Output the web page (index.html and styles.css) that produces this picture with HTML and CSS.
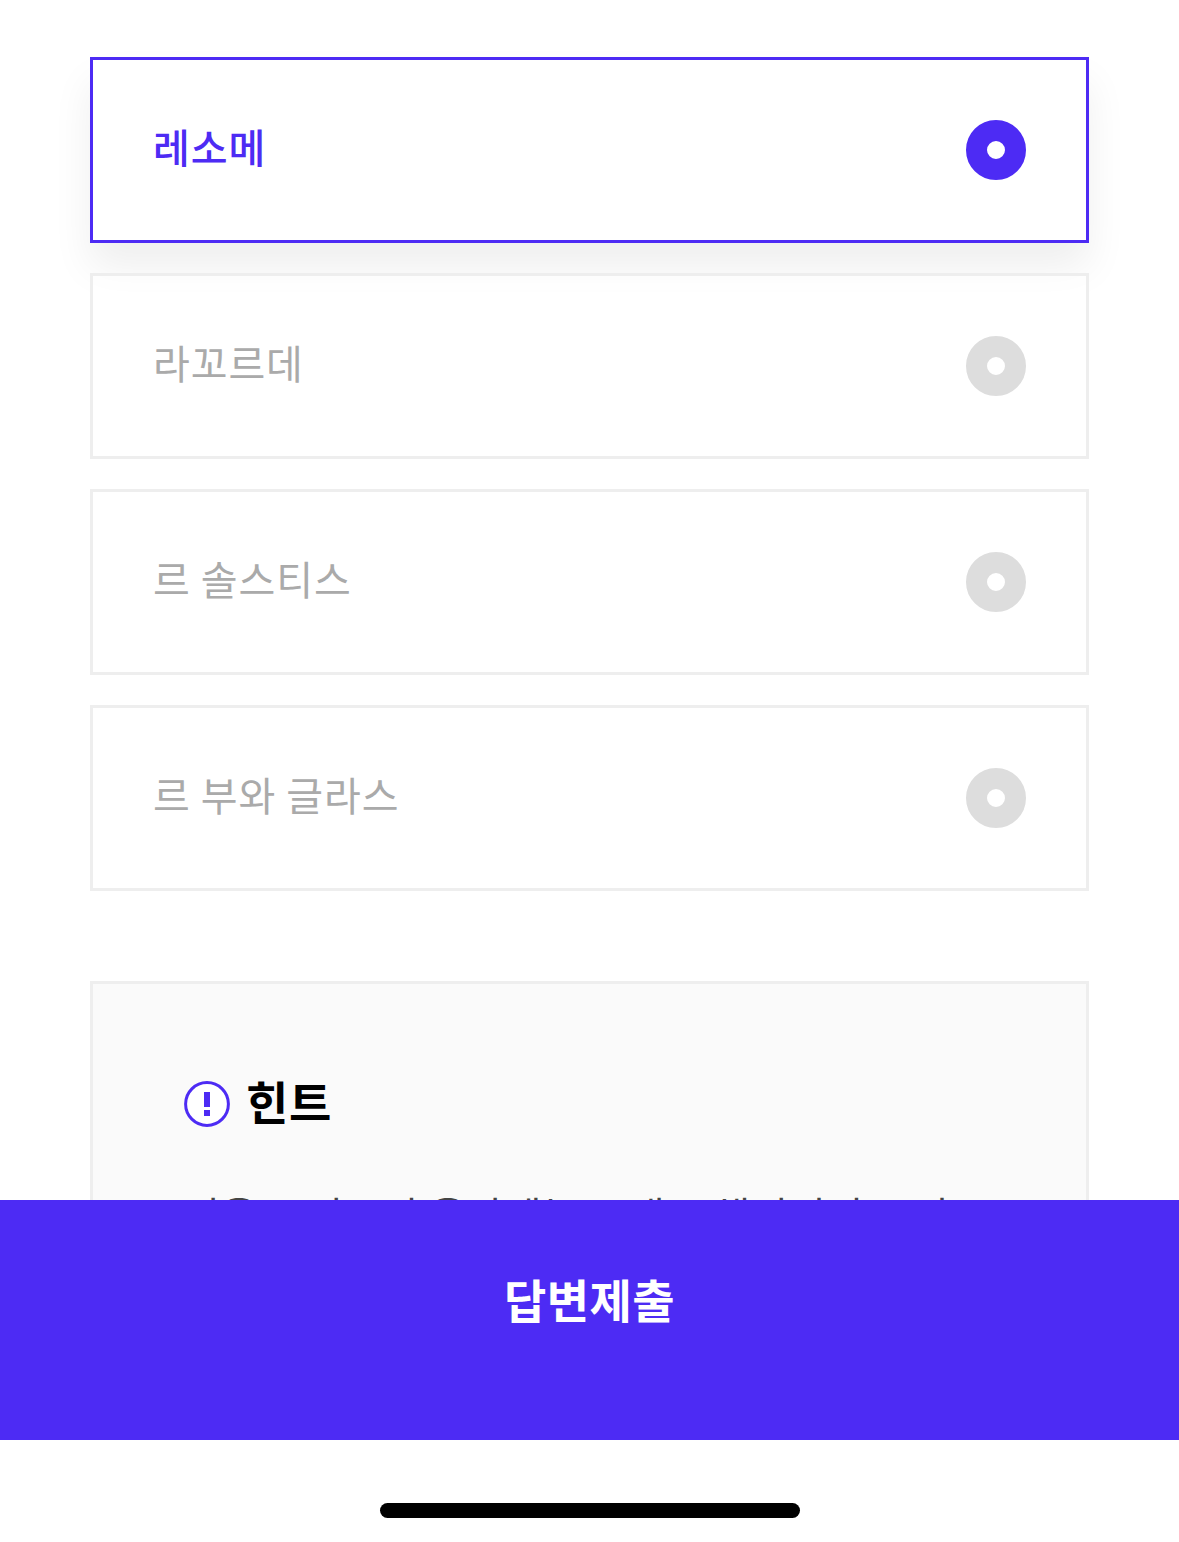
FILE: index.html
```html
<!DOCTYPE html>
<html lang="ko">
<head>
    <meta charset="UTF-8">
    <meta name="viewport" content="width=device-width, initial-scale=1.0">
    <title>답변제출</title>
    <link rel="stylesheet" href="styles.css">
</head>
<body>
    <main>
        <div class="answers">
            <div class="answer selected">
                <span class="name">레소메</span>
                <span class="radio"></span>
            </div>
            <div class="answer">
                <span class="name">라꼬르데</span>
                <span class="radio"></span>
            </div>
            <div class="answer">
                <span class="name">르 솔스티스</span>
                <span class="radio"></span>
            </div>
            <div class="answer">
                <span class="name">르 부와 글라스</span>
                <span class="radio"></span>
            </div>
        </div>

        <section class="hint">
            <h2>
                <svg width="46" height="46" viewBox="0 0 46 46">
                    <circle cx="23" cy="23" r="21.4" fill="#fff" stroke="#4d2bf4" stroke-width="3"/>
                    <path d="M20 11h6v15h-6zM20 29h6v6h-6z" fill="#4d2bf4"/>
                </svg>
                <span>힌트</span>
            </h2>
            <p>서울로 리스리 올라데는 브래드 해리리리르 리</p>
        </section>
    </main>

    <button class="submit">답변제출</button>
    <footer>
        <div class="home-bar"></div>
    </footer>
</body>
</html>
```

FILE: styles.css
```css
* {
    box-sizing: border-box;
}
body {
    margin: 0;
    height: 1542px;
    display: flex;
    flex-direction: column;
    overflow: hidden;
    background-color: #fff;
    font-family: "Noto Sans CJK KR", sans-serif;
}
main {
    height: 1200px;
    padding: 57px 90px 0;
    overflow: hidden;
}
.answers {
    display: flex;
    flex-direction: column;
    gap: 30px;
}
.answer {
    display: flex;
    align-items: center;
    justify-content: space-between;
    height: 186px;
    padding: 0 60px;
    border: 3px solid #eee;
    background-color: rgba(255, 255, 255, 0.6);
    color: #aaa;
}
.answer .name {
    padding-bottom: 8px;
    font-size: 40px;
    font-weight: 400;
    letter-spacing: 0.9px;
    word-spacing: -2px;
    line-height: 60px;
}
.answer.selected {
    border-color: #4d2bf4;
    background-color: #fff;
    color: #4d2bf4;
    box-shadow: 0 25px 38px rgba(0, 0, 0, 0.065);
}
.answer.selected .name {
    font-weight: 500;
}
.radio {
    width: 60px;
    height: 60px;
    border: 21px solid #ddd;
    border-radius: 50%;
    background-color: #fff;
}
.selected .radio {
    border-color: #4d2bf4;
}
.hint {
    height: 500px;
    margin-top: 90px;
    padding: 87px 90px;
    border: 3px solid #eee;
    background-color: #fafafa;
}
.hint h2 {
    display: flex;
    align-items: center;
    gap: 16px;
    height: 66px;
    margin: 0 0 42px;
    padding-left: 1px;
    color: #000;
    font-size: 46px;
    font-weight: 700;
    letter-spacing: 0.6px;
    line-height: 66px;
}
.hint h2 span {
    padding-bottom: 8px;
}
.hint p {
    margin: 0;
    color: #444;
    font-size: 40px;
    font-weight: 400;
    letter-spacing: 0.9px;
    word-spacing: -2px;
    line-height: 71px;
    white-space: nowrap;
}
.submit {
    height: 240px;
    padding: 0 0 45px;
    border: 0;
    background-color: #4d2bf4;
    color: #fff;
    font-family: inherit;
    font-size: 46px;
    font-weight: 700;
    letter-spacing: 0.4px;
}
footer {
    display: flex;
    justify-content: center;
    height: 102px;
    padding-top: 63px;
}
.home-bar {
    width: 420px;
    height: 15px;
    border-radius: 8px;
    background-color: #000;
}
```
